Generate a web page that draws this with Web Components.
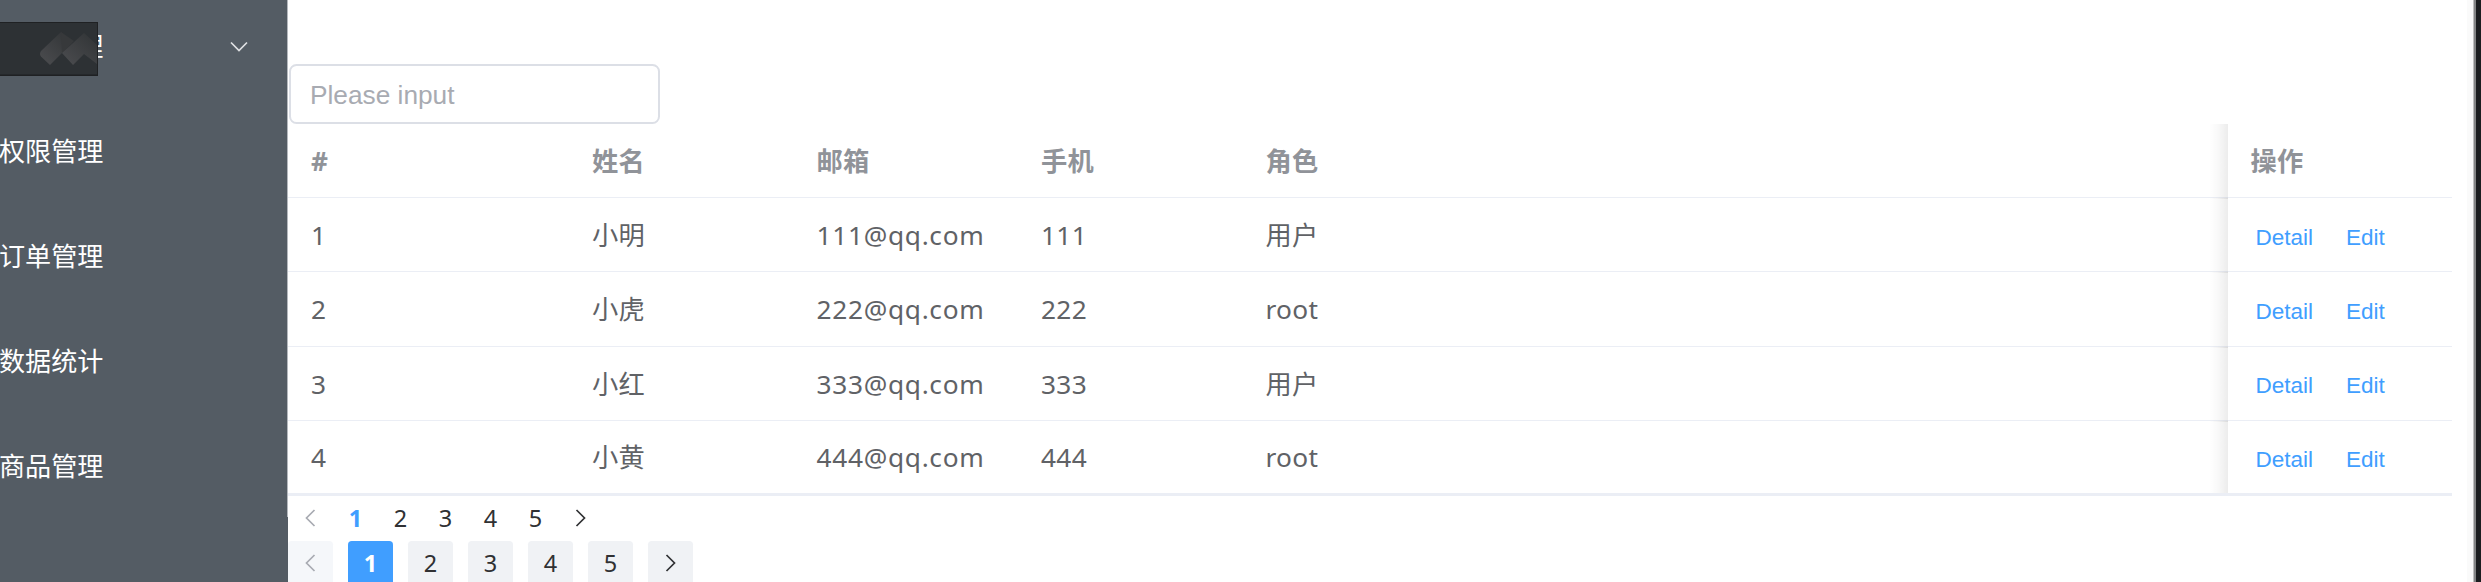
<!DOCTYPE html>
<html lang="zh-CN">
<head>
<meta charset="utf-8">
<title>管理</title>
<style>
html,body{margin:0;height:582px;overflow:hidden;background:#fff}
body{font-family:"Noto Sans","Noto Sans CJK SC",sans-serif;font-size:26.25px}
</style>
</head>
<body>
<admin-app></admin-app>
<script>
function define(name, html, setup) {
  customElements.define(name, class extends HTMLElement {
    constructor() {
      super();
      this.attachShadow({ mode: 'open' }).innerHTML = html;
    }
    connectedCallback() { if (setup) setup(this, this.shadowRoot); }
  });
}

define('menu-item', `<style>
:host{display:flex;align-items:center;height:105px;color:#fff;font-family:"Noto Sans CJK SC",sans-serif;font-size:26.1px;line-height:40px;white-space:nowrap}
.label{margin-left:-1px;flex:1;padding-bottom:2px}
</style><span class="label"><slot></slot></span><slot name="suffix"></slot>`);

define('brand-plate', `<style>
:host{display:block;position:absolute;left:0;top:22px;width:98px;height:54px}
svg{display:block}
</style><svg width="98" height="54" viewBox="0 0 98 54">
<defs><linearGradient id="a" x1="1" y1="0" x2="0" y2="1"><stop offset="0" stop-color="#303335"/><stop offset="1" stop-color="#4c4d50"/></linearGradient></defs>
<rect width="98" height="54" fill="#1f2123"/><rect width="97" height="51.5" y="1" fill="#2d3134"/>
<path d="M61 10 72 21 50 43 41 34.500Q39 32 41 29Z" fill="url(#a)"/>
<path d="M61 10 74 19 62 31Z" fill="#37393b"/>
<path d="M62 31 84 11 97 23V42L84 32 73 43Z" fill="url(#a)"/>
</svg>`);

define('chevron-icon', `<style>
:host{display:block;line-height:0}
svg{display:block;overflow:visible}
:host([dir-to=down]) svg{transform:rotate(-90deg)}
:host([dir-to=right]) svg{transform:rotate(180deg)}
</style><svg width="22" height="22" viewBox="0 0 22 22" fill="none" stroke="currentColor" stroke-width="1.700"><path d="M14.500 3 6.500 11 14.500 19"/></svg>`);

define('side-menu', `<style>
:host{display:block;width:288px;height:582px;background:#545c64;border-right:1px solid #b4b8bd;box-sizing:border-box;position:relative}
nav{margin-top:-7px}
chevron-icon{color:#dfe1e3;margin-right:37.500px}
.edge{position:absolute;left:287px;top:517px;width:1px;height:65px;background:#545c64}
</style><nav>
<menu-item>用户管理<chevron-icon slot="suffix" dir-to="down"></chevron-icon></menu-item>
<menu-item>权限管理</menu-item><menu-item>订单管理</menu-item><menu-item>数据统计</menu-item><menu-item>商品管理</menu-item>
</nav><brand-plate></brand-plate><span class="edge"></span>`);

define('text-input', `<style>
:host{display:block;width:371px;height:60px;margin-left:1px}
input{box-sizing:border-box;width:100%;height:100%;margin:0;border:2px solid #dcdfe6;border-radius:7.500px;padding:2px 19px 0;font:26.25px "Liberation Sans",Arial,sans-serif;background:#fff;outline:0}
input::placeholder{color:#a8abb2;opacity:1}
</style><input type="text" placeholder="Please input">`);

define('link-button', `<style>
:host{display:block}
button{display:block;border:0;background:none;margin:0;padding:0;color:#409eff;font:22.500px/45px "Liberation Sans",Arial,sans-serif}
</style><button><slot></slot></button>`);

define('data-table', `<style>
:host{display:block;width:2164px;color:#606266}
.row{display:grid;grid-template-columns:281px 224.500px 224.500px 224.500px 985px 224.500px;height:74.2px;box-sizing:border-box;border-bottom:1.500px solid #ebeef5}
.row:last-child{border-bottom:3px solid #ebeef5;height:75.2px}
.cell{display:flex;align-items:center;padding-left:23px;padding-top:2px;line-height:43px;white-space:nowrap;letter-spacing:.3px}
.row:not(.head) .cell:nth-child(3){letter-spacing:.7px}
.head{color:#909399;font-weight:700}
.fixed{position:relative}
.fixed::before{content:"";position:absolute;left:-19px;width:19px;top:0;bottom:-2px;background:linear-gradient(90deg,rgba(0,0,0,0),rgba(0,0,0,.025) 45%,rgba(0,0,0,.075))}
.row:last-child .fixed::before{bottom:0}
.ops{padding-left:28px;padding-top:4.500px;gap:33px}
</style><div id="rows"></div>`, (el, root) => {
  const data = [['1','小明','111@qq.com','111','用户'],['2','小虎','222@qq.com','222','root'],['3','小红','333@qq.com','333','用户'],['4','小黄','444@qq.com','444','root']];
  const cells = r => r.map(t => `<div class="cell">${t}</div>`).join('');
  root.getElementById('rows').innerHTML =
    `<div class="row head">${cells(['#','姓名','邮箱','手机','角色'])}<div class="cell fixed">操作</div></div>` +
    data.map(r => `<div class="row">${cells(r)}<div class="cell fixed ops"><link-button>Detail</link-button><link-button>Edit</link-button></div></div>`).join('');
});

define('page-bar', `<style>
:host{display:flex;height:45px;font-size:23.500px;color:#303133}
:host([filled]){gap:15px}
.p{display:flex;align-items:center;justify-content:center;width:45px;height:45px;line-height:45px;box-sizing:border-box;border-radius:3.75px}
.p:last-child chevron-icon{margin-right:2px}
.off{color:#a8abb2}
.on{color:#409eff;font-weight:700}
:host([filled]) .p{background:#f0f2f5}
:host([filled]) .off{background:#f5f7fa}
:host([filled]) .on{background:#409eff;color:#fff}
</style><div class="p off"><chevron-icon></chevron-icon></div><div class="p on">1</div><div class="p">2</div><div class="p">3</div><div class="p">4</div><div class="p">5</div><div class="p"><chevron-icon dir-to="right"></chevron-icon></div>`);

define('window-edge', `<style>
:host{display:flex;width:14px;height:582px}
.a{width:6px;background:#fafafa}.b{width:1px;background:#c0c0c0}.c{width:2px;background:#838485}.d{flex:1;background:#1b1d1f}
</style><span class="a"></span><span class="b"></span><span class="c"></span><span class="d"></span>`);

define('admin-app', `<style>
:host{display:flex;width:2481px;height:582px;overflow:hidden;background:#fff}
main{flex:1;padding-top:64px;min-width:0}
</style><side-menu></side-menu><main><text-input></text-input><data-table></data-table><page-bar></page-bar><page-bar filled></page-bar></main><window-edge></window-edge>`);
</script>
</body>
</html>
